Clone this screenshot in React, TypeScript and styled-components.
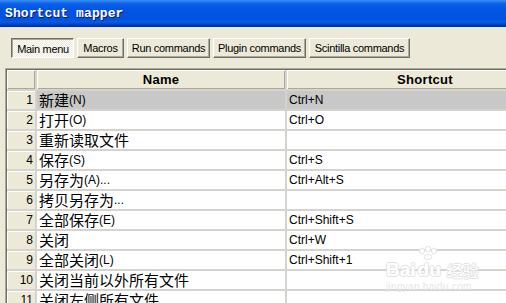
import React from 'react';
import styled, { createGlobalStyle, css } from 'styled-components';

const Global = createGlobalStyle`
  html, body { margin: 0; padding: 0; overflow: hidden; background: #ECE9D8; }
  body { width: 506px; height: 303px; font-family: "Liberation Sans", Arial, "Noto Sans CJK SC", sans-serif; }
`;

const Window = styled.div`
  position: relative;
  width: 506px;
  height: 303px;
  overflow: hidden;
  background: #ECE9D8;
  display: flex;
  flex-direction: column;
`;

const TitleBar = styled.div`
  flex: none;
  height: 27px;
  box-sizing: border-box;
  padding-left: 5px;
  display: flex;
  align-items: center;
  background: linear-gradient(
    to bottom,
    #3D8EF3 0px,
    #1E74EE 2px,
    #0A5EE6 4px,
    #0055E2 10px,
    #0052DE 19px,
    #0A5BE4 22px,
    #0049CF 24px,
    #0032A8 26px,
    #002D9A 27px
  );
  color: #fff;
  font-family: "Liberation Mono", "DejaVu Sans Mono", monospace;
  font-weight: bold;
  font-size: 13px;
  text-shadow: 1px 1px 0 #0A1883;
  letter-spacing: 0.1px;
`;

const Toolbar = styled.div`
  flex: none;
  height: 41px;
  box-sizing: border-box;
  padding: 11px 0 0 11px;
  display: flex;
  gap: 3px;
  align-items: flex-start;
`;

const TabButton = styled.div<{ $w: number; $pressed?: boolean }>`
  width: ${(p) => p.$w}px;
  height: 20px;
  box-sizing: border-box;
  display: flex;
  align-items: center;
  justify-content: center;
  font-size: 11px;
  letter-spacing: -0.3px;
  color: #000;
  border: 1px solid;
  ${(p) =>
    p.$pressed
      ? css`
          border-color: #716F64 #fff #fff #716F64;
          box-shadow: inset 1px 1px #ACA899;
          background: repeating-conic-gradient(#fff 0 25%, #ECE9D8 0 50%) 0 0 / 2px 2px;
          padding: 1px 0 0 1px;
        `
      : css`
          border-color: #fff #716F64 #716F64 #fff;
          box-shadow: inset -1px -1px #ACA899;
          background: #ECE9D8;
        `}
`;

const Frame = styled.div`
  flex: none;
  margin-left: 5px;
  border-top: 1px solid #ACA899;
  border-left: 1px solid #ACA899;
`;

const Grid = styled.div`
  border-top: 1px solid #716F64;
  border-left: 1px solid #716F64;
  display: grid;
  grid-template-columns: 28px 248px 276px;
  grid-template-rows: 19px;
  grid-auto-rows: 18px;
  gap: 2px;
  background: #D6D3CE;
  width: 556px;
`;

const HeaderCell = styled.div`
  background: #ECE9D8;
  box-shadow: inset 1px 1px #fff, inset -1px -1px #ACA899;
  display: flex;
  align-items: center;
  justify-content: center;
  font-weight: bold;
  font-size: 13px;
  letter-spacing: 0.3px;
  color: #000;
`;

const RowHead = styled.div`
  background: #ECE9D8;
  box-shadow: inset 1px 1px #fff;
  display: flex;
  align-items: center;
  justify-content: flex-end;
  padding-right: 2px;
  font-size: 12px;
  color: #000;
`;

const Cell = styled.div<{ $selected?: boolean }>`
  background: ${(p) => (p.$selected ? '#C8C8C8' : '#fff')};
  display: flex;
  align-items: center;
  padding-left: 2px;
  font-size: 12px;
  line-height: 18px;
  color: #000;
  white-space: nowrap;
`;

const Cjk = styled.span`
  font-family: "Noto Sans CJK SC", sans-serif;
  font-size: 15px;
  line-height: 18px;
`;

const Watermark = styled.div`
  position: absolute;
  left: 386px;
  top: 246px;
  width: 96px;
  display: flex;
  flex-direction: column;
  align-items: flex-start;
  pointer-events: none;
`;

const MarkLine = styled.div`
  display: flex;
  align-items: flex-end;
  gap: 2px;
`;

const MarkBig = styled.span`
  font-family: "Liberation Sans", sans-serif;
  font-weight: bold;
  font-size: 19px;
  line-height: 19px;
  color: #fff;
  text-shadow: 1px 0 #E2E2E2, -1px 0 #E2E2E2, 0 1px #E2E2E2, 0 -1px #E2E2E2;
`;

const MarkCjk = styled.span`
  font-family: "Noto Sans CJK SC", sans-serif;
  font-size: 16px;
  line-height: 18px;
  color: #fff;
  text-shadow: 1px 0 #E2E2E2, -1px 0 #E2E2E2, 0 1px #E2E2E2, 0 -1px #E2E2E2;
  margin-left: 4px;
`;

const MarkSmall = styled.span`
  font-family: "Liberation Sans", sans-serif;
  font-size: 10px;
  line-height: 12px;
  color: #E6E6E6;
  margin-top: 2px;
  letter-spacing: 0.3px;
`;

const PawWrap = styled.div`
  height: 14px;
  padding-left: 30px;
`;

type Row = { n: number; cjk: string; rest: string; sc: string; sel?: boolean };

const rows: Row[] = [
  { n: 1, cjk: '新建', rest: '(N)', sc: 'Ctrl+N', sel: true },
  { n: 2, cjk: '打开', rest: '(O)', sc: 'Ctrl+O' },
  { n: 3, cjk: '重新读取文件', rest: '', sc: '' },
  { n: 4, cjk: '保存', rest: '(S)', sc: 'Ctrl+S' },
  { n: 5, cjk: '另存为', rest: '(A)...', sc: 'Ctrl+Alt+S' },
  { n: 6, cjk: '拷贝另存为', rest: '...', sc: '' },
  { n: 7, cjk: '全部保存', rest: '(E)', sc: 'Ctrl+Shift+S' },
  { n: 8, cjk: '关闭', rest: '', sc: 'Ctrl+W' },
  { n: 9, cjk: '全部关闭', rest: '(L)', sc: 'Ctrl+Shift+1' },
  { n: 10, cjk: '关闭当前以外所有文件', rest: '', sc: '' },
  { n: 11, cjk: '关闭左侧所有文件', rest: '', sc: '' },
];

const tabs = [
  { label: 'Main menu', w: 63, pressed: true },
  { label: 'Macros', w: 47 },
  { label: 'Run commands', w: 83 },
  { label: 'Plugin commands', w: 93 },
  { label: 'Scintilla commands', w: 101 },
];

export default function App() {
  return (
    <Window>
      <Global />
      <TitleBar>Shortcut mapper</TitleBar>
      <Toolbar>
        {tabs.map((t) => (
          <TabButton key={t.label} $w={t.w} $pressed={t.pressed}>
            {t.label}
          </TabButton>
        ))}
      </Toolbar>
      <Frame>
        <Grid>
          <HeaderCell />
          <HeaderCell>Name</HeaderCell>
          <HeaderCell>Shortcut</HeaderCell>
          {rows.map((r) => (
            <React.Fragment key={r.n}>
              <RowHead>{r.n}</RowHead>
              <Cell $selected={r.sel}>
                <Cjk>{r.cjk}</Cjk>
                {r.rest}
              </Cell>
              <Cell $selected={r.sel}>{r.sc}</Cell>
            </React.Fragment>
          ))}
        </Grid>
      </Frame>
      <Watermark>
        <PawWrap>
          <svg width="24" height="14" viewBox="0 0 24 14">
            <g fill="#fff" stroke="#E2E2E2" strokeWidth="1">
              <ellipse cx="6" cy="5" rx="2.5" ry="3" />
              <ellipse cx="12" cy="3" rx="2.5" ry="3" />
              <ellipse cx="18" cy="5" rx="2.5" ry="3" />
              <ellipse cx="12" cy="11" rx="4" ry="2.5" />
            </g>
          </svg>
        </PawWrap>
        <MarkLine>
          <MarkBig>Bai</MarkBig>
          <MarkBig>du</MarkBig>
          <MarkCjk>经验</MarkCjk>
        </MarkLine>
        <MarkSmall>jingyan.baidu.com</MarkSmall>
      </Watermark>
    </Window>
  );
}
